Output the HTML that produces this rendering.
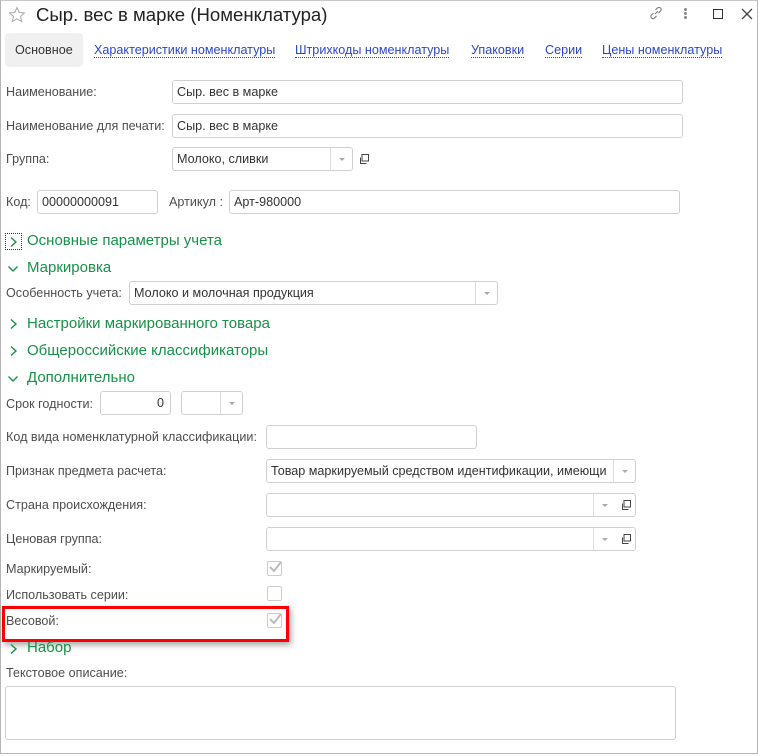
<!DOCTYPE html>
<html><head><meta charset="utf-8"><style>
*{box-sizing:border-box;margin:0;padding:0}
body{width:758px;height:756px;background:#fff;font-family:"Liberation Sans",Arial,sans-serif;font-size:12.6px;color:#4d4d4d;position:relative;overflow:hidden}
.win{position:absolute;left:0;top:0;width:758px;height:754px;border:1px solid #b5b5b5;border-top:1px solid #c8c8c8}
.a{position:absolute;white-space:nowrap}
.in{position:absolute;border:1px solid #cfcfcf;border-radius:3px;background:#fff;height:24px;padding:4px 4px;color:#333;white-space:nowrap;overflow:hidden}
.dd{position:absolute;top:0;bottom:0;width:22px;border-left:1px solid #ddd}
.dd:after{content:"";position:absolute;left:8px;top:10px;border:3px solid transparent;border-top:3px solid #aaa}
.lk{color:#2a48c4;border-bottom:1px dotted #2a48c4;line-height:14px}
.h{position:absolute;color:#169147;font-size:15px;white-space:nowrap}
.cb{position:absolute;width:15px;height:15px;border:1px solid #ccc;border-radius:2px}
.chv{position:absolute}
</style></head><body>
<div class="win"></div>
<svg class="a" style="left:8px;top:6px" width="18" height="18" viewBox="0 0 18 18"><path d="M9 1.5l2.2 5 5.3.4-4 3.5 1.2 5.2L9 12.8 4.3 15.6l1.2-5.2-4-3.5 5.3-.4z" fill="none" stroke="#aaa" stroke-width="1"/></svg>
<div class="a" style="left:36px;top:4px;font-size:18.6px;color:#222">Сыр. вес в марке (Номенклатура)</div>
<svg class="a" style="left:648px;top:5px" width="16" height="16" viewBox="0 0 16 16"><path d="M7 9l3-3M5.5 8L3.5 10a2 2 0 003 3l2-2M10.5 8l2-2a2 2 0 00-3-3l-2 2" fill="none" stroke="#777" stroke-width="1.1"/></svg>
<div class="a" style="left:684px;top:8px;width:3px;height:3px;background:#888;border-radius:2px;box-shadow:0 4px 0 #888,0 8px 0 #888"></div>
<div class="a" style="left:713px;top:9px;width:10px;height:10px;border:1.5px solid #333"></div>
<svg class="a" style="left:741px;top:8px" width="12" height="12"><path d="M1 1l10 10M11 1L1 11" stroke="#444" stroke-width="1.3"/></svg>
<div class="a" style="left:5px;top:33px;width:78px;height:34px;background:#f0f0f0;border-radius:4px"></div>
<div class="a" style="left:15px;top:43px;color:#333">Основное</div>
<div class="a lk" style="left:94px;top:43px">Характеристики номенклатуры</div>
<div class="a lk" style="left:295px;top:43px">Штрихкоды номенклатуры</div>
<div class="a lk" style="left:471px;top:43px">Упаковки</div>
<div class="a lk" style="left:545px;top:43px">Серии</div>
<div class="a lk" style="left:602px;top:43px">Цены номенклатуры</div>

<div class="a" style="left:6px;top:85px">Наименование:</div>
<div class="in" style="left:172px;top:80px;width:511px">Сыр. вес в марке</div>
<div class="a" style="left:6px;top:119px">Наименование для печати:</div>
<div class="in" style="left:172px;top:114px;width:511px">Сыр. вес в марке</div>
<div class="a" style="left:6px;top:152px">Группа:</div>
<div class="in" style="left:172px;top:147px;width:181px">Молоко, сливки<div class="dd" style="right:0"></div></div>
<svg class="a" style="left:357px;top:152px" width="14" height="14"><path d="M5 2.5h6.5v6.5H5zM3.5 5.5v6h6" fill="none" stroke="#444"/></svg>

<div class="a" style="left:6px;top:195px">Код:</div>
<div class="in" style="left:37px;top:190px;width:121px">00000000091</div>
<div class="a" style="left:169px;top:195px">Артикул :</div>
<div class="in" style="left:229px;top:190px;width:451px">Арт-980000</div>

<div class="a" style="left:5px;top:233px;width:17px;height:17px;border:1px dotted #333"></div>
<svg class="chv" style="left:9px;top:236px" width="10" height="12"><path d="M2 1.5l5 4.5-5 4.5" fill="none" stroke="#169147" stroke-width="1.4"/></svg>
<div class="h" style="left:27px;top:232px">Основные параметры учета</div>
<svg class="chv" style="left:7px;top:264px" width="12" height="10"><path d="M1.5 2.5l4.5 4.5 4.5-4.5" fill="none" stroke="#169147" stroke-width="1.4"/></svg>
<div class="h" style="left:27px;top:259px">Маркировка</div>
<div class="a" style="left:6px;top:286px">Особенность учета:</div>
<div class="in" style="left:129px;top:281px;width:369px">Молоко и молочная продукция<div class="dd" style="right:0"></div></div>
<svg class="chv" style="left:9px;top:318px" width="10" height="12"><path d="M2 1.5l5 4.5-5 4.5" fill="none" stroke="#169147" stroke-width="1.4"/></svg>
<div class="h" style="left:27px;top:315px">Настройки маркированного товара</div>
<svg class="chv" style="left:9px;top:345px" width="10" height="12"><path d="M2 1.5l5 4.5-5 4.5" fill="none" stroke="#169147" stroke-width="1.4"/></svg>
<div class="h" style="left:27px;top:342px">Общероссийские классификаторы</div>
<svg class="chv" style="left:7px;top:374px" width="12" height="10"><path d="M1.5 2.5l4.5 4.5 4.5-4.5" fill="none" stroke="#169147" stroke-width="1.4"/></svg>
<div class="h" style="left:27px;top:369px">Дополнительно</div>
<div class="a" style="left:6px;top:397px">Срок годности:</div>
<div class="in" style="left:100px;top:391px;width:71px;text-align:right;padding-right:6px">0</div>
<div class="in" style="left:181px;top:391px;width:62px"><div class="dd" style="right:0"></div></div>

<div class="a" style="left:6px;top:430px">Код вида номенклатурной классификации:</div>
<div class="in" style="left:266px;top:425px;width:211px"></div>
<div class="a" style="left:6px;top:464px">Признак предмета расчета:</div>
<div class="in" style="left:266px;top:459px;width:370px;padding-right:26px">Товар маркируемый средством идентификации, имеющи<div class="dd" style="right:0"></div></div>
<div class="a" style="left:6px;top:498px">Страна происхождения:</div>
<div class="in" style="left:266px;top:493px;width:370px"><div class="dd" style="right:20px"></div></div>
<svg class="a" style="left:619px;top:498px" width="14" height="14"><path d="M5 2.5h6.5v6.5H5zM3.5 5.5v6h6" fill="none" stroke="#444"/></svg>
<div class="a" style="left:6px;top:532px">Ценовая группа:</div>
<div class="in" style="left:266px;top:527px;width:370px"><div class="dd" style="right:20px"></div></div>
<svg class="a" style="left:619px;top:532px" width="14" height="14"><path d="M5 2.5h6.5v6.5H5zM3.5 5.5v6h6" fill="none" stroke="#444"/></svg>

<div class="a" style="left:6px;top:562px">Маркируемый:</div>
<div class="cb" style="left:267px;top:561px"><svg width="15" height="15" style="position:absolute;left:0;top:-2px"><path d="M2 7l4 4 7-9" fill="none" stroke="#bbb" stroke-width="2"/></svg></div>
<div class="a" style="left:6px;top:588px">Использовать серии:</div>
<div class="cb" style="left:267px;top:586px"></div>
<div class="a" style="left:2px;top:606px;width:287px;height:36px;border:3px solid #f00;box-shadow:2px 3px 6px rgba(0,0,0,.35)"></div>
<div class="a" style="left:6px;top:614px">Весовой:</div>
<div class="cb" style="left:267px;top:613px"><svg width="15" height="15" style="position:absolute;left:0;top:-2px"><path d="M2 7l4 4 7-9" fill="none" stroke="#bbb" stroke-width="2"/></svg></div>
<svg class="chv" style="left:9px;top:643px" width="10" height="12"><path d="M2 1.5l5 4.5-5 4.5" fill="none" stroke="#169147" stroke-width="1.4"/></svg>
<div class="h" style="left:27px;top:639px">Набор</div>
<div class="a" style="left:6px;top:666px">Текстовое описание:</div>
<div class="in" style="left:5px;top:686px;width:671px;height:54px"></div>
</body></html>
